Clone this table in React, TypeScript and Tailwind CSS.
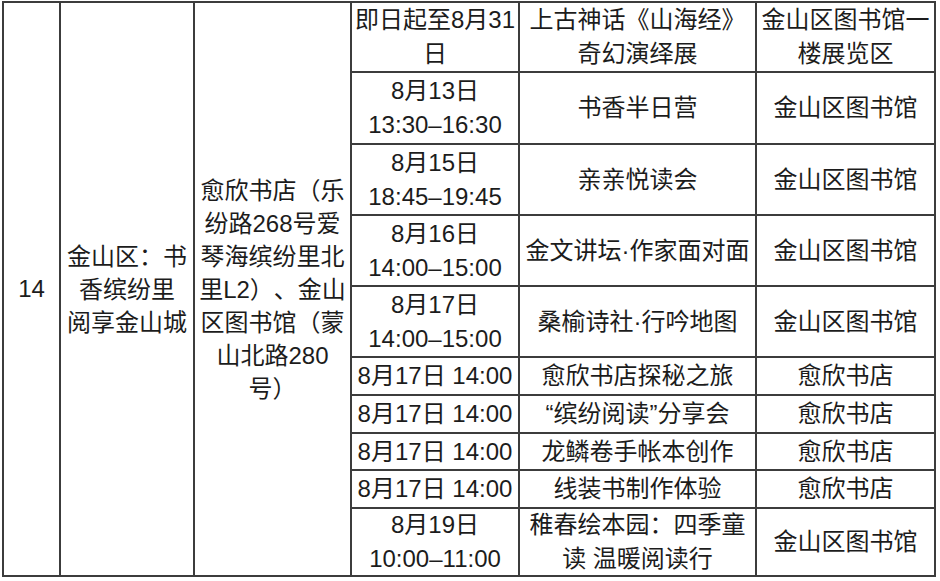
import React from "react";

const cell =
  "bg-white flex items-center justify-center text-center whitespace-nowrap";

type Row = { d: React.ReactNode; n: React.ReactNode; p: React.ReactNode };

const rows: Row[] = [
  { d: <>即日起至8月31<br />日</>, n: <>上古神话《山海经》<br />奇幻演绎展</>, p: <>金山区图书馆一<br />楼展览区</> },
  { d: <>8月13日<br />13:30–16:30</>, n: "书香半日营", p: "金山区图书馆" },
  { d: <>8月15日<br />18:45–19:45</>, n: "亲亲悦读会", p: "金山区图书馆" },
  { d: <>8月16日<br />14:00–15:00</>, n: "金文讲坛·作家面对面", p: "金山区图书馆" },
  { d: <>8月17日<br />14:00–15:00</>, n: "桑榆诗社·行吟地图", p: "金山区图书馆" },
  { d: "8月17日 14:00", n: "愈欣书店探秘之旅", p: "愈欣书店" },
  { d: "8月17日 14:00", n: "“缤纷阅读”分享会", p: "愈欣书店" },
  { d: "8月17日 14:00", n: "龙鳞卷手帐本创作", p: "愈欣书店" },
  { d: "8月17日 14:00", n: "线装书制作体验", p: "愈欣书店" },
  { d: <>8月19日<br />10:00–11:00</>, n: <>稚春绘本园：四季童<br />读 温暖阅读行</>, p: "金山区图书馆" },
];

export default function App() {
  return (
    <div className="min-h-[581px] w-[940px] bg-white pt-[1px] pl-[2px] font-['Liberation_Sans','Noto_Sans_CJK_SC',sans-serif] text-[24px] leading-[34px] text-[#1c1c1c] [text-spacing-trim:space-all]">
      <div className="grid w-fit grid-cols-[55px_132px_155px_166px_235px_177px] grid-rows-[68px_70px_69px_69px_69px_36px_36px_35px_36px_66px] gap-[2px] bg-[#3c3c3c] p-[2px]">
        <div className={`${cell} row-span-10`}>14</div>
        <div className={`${cell} row-span-10`}>
          <div className="leading-[33px]">
            金山区：书
            <br />
            香缤纷里
            <br />
            阅享金山城
          </div>
        </div>
        <div className={`${cell} row-span-10`}>
          <div className="leading-[33px]">
            愈欣书店（乐
            <br />
            纷路268号爱
            <br />
            琴海缤纷里北
            <br />
            里L2）、金山
            <br />
            区图书馆（蒙
            <br />
            山北路280
            <br />
            号）
          </div>
        </div>
        {rows.map((r, i) => (
          <React.Fragment key={i}>
            <div className={cell}>
              <div>{r.d}</div>
            </div>
            <div className={cell}>
              <div>{r.n}</div>
            </div>
            <div className={cell}>
              <div>{r.p}</div>
            </div>
          </React.Fragment>
        ))}
      </div>
    </div>
  );
}
